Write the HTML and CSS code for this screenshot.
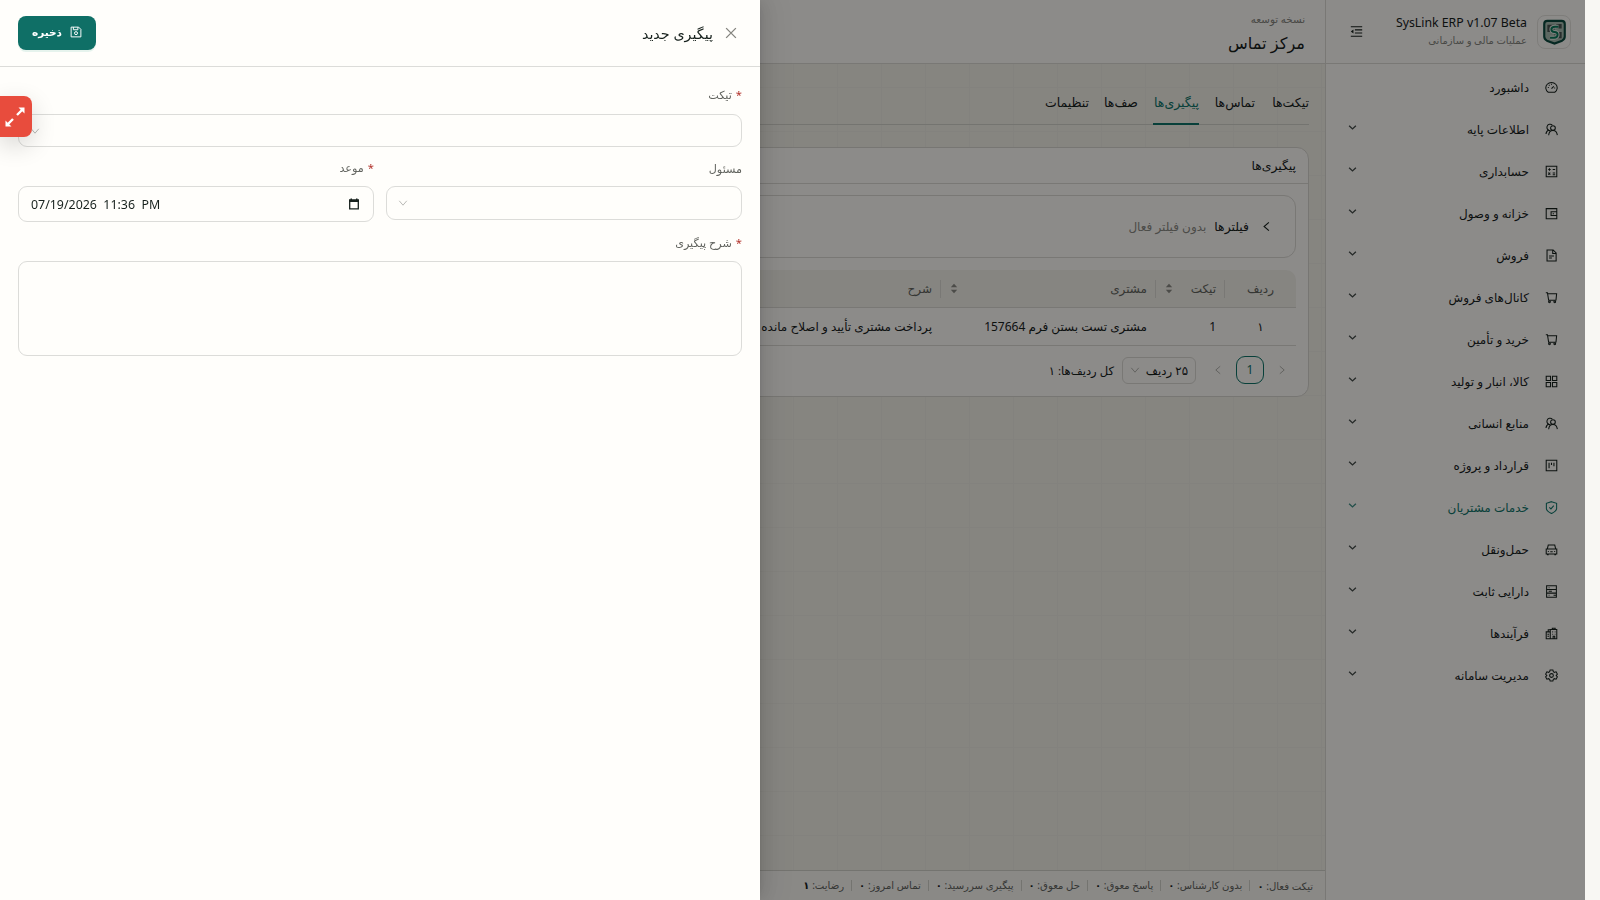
FILE: index.html
```html
<!DOCTYPE html>
<html lang="fa" dir="rtl">
<head>
    <meta charset="UTF-8">
    <meta name="viewport" content="width=device-width, initial-scale=1.0">
    <title>مرکز تماس</title>
    <link rel="stylesheet" href="styles.css">
</head>
<body>
    <svg class="sprite">
        <symbol id="i-dash" viewBox="0 0 16 16"><path d="M4 13.800a7 6.600 0 1 1 8 0zM8 9.500l2.800-3M8 3.500v1.200M3.500 8h1.200M11.300 8.500h1.200M4.800 4.800l.8.8"/></symbol>
        <symbol id="i-team" viewBox="0 0 16 16"><circle cx="9.800" cy="6.200" r="2.900"/><path d="M4.500 15c.3-3.500 2-5.800 5.300-5.800s5 2.500 5.400 5.800M6.500 9.500a4 4 0 1 1 2.500-7M5 8.200C2.800 9 1.500 10.800 1.200 13.500"/></symbol>
        <symbol id="i-calc" viewBox="0 0 16 16"><path d="M1.500 1.500h13v13h-13zM4 5.500h3M5.500 4v3M9.500 5.500h3M4 9.500l2.500 2.500M6.500 9.500L4 12M9.500 9.800h3M9.500 12h3"/></symbol>
        <symbol id="i-wallet" viewBox="0 0 16 16"><path d="M1.500 2h13v12.500h-13zM14.500 5.800H7.500v4.700h7M9.500 8.200h1.500"/></symbol>
        <symbol id="i-file" viewBox="0 0 16 16"><path d="M2.500 1.200h7.500l3.700 3.700v9.900H2.500zM9.500 1.500v4h4M5 8.500h6M5 11h3.500"/></symbol>
        <symbol id="i-cart" viewBox="0 0 16 16"><path d="M1 2.200h2l1.500 9.300h9.200M3.300 3.500h11l-.8 8"/><circle cx="5.500" cy="13.300" r="1.100"/><circle cx="12" cy="13.300" r="1.100"/></symbol>
        <symbol id="i-grid" viewBox="0 0 16 16"><path d="M1.500 1.500h5.300v5.300H1.500zM9.200 1.500h5.300v5.300H9.200zM1.500 9.200h5.300v5.300H1.500zM9.200 9.200h5.300v5.300H9.200z"/></symbol>
        <symbol id="i-project" viewBox="0 0 16 16"><path d="M1.500 1.500h13v13h-13zM5 4.500v7M8 4.500v3M11 4.500v4.500"/></symbol>
        <symbol id="i-shield" viewBox="0 0 16 16"><path d="M8 .8l6.300 2v6.500c0 3-3.300 4.700-6.300 6.200-3-1.500-6.300-3.200-6.300-6.200V2.800zM5.300 7.800l2 2 3.500-4"/></symbol>
        <symbol id="i-car" viewBox="0 0 16 16"><path d="M1.500 7.500h13v6h-13zM2.800 7.500L4 2.500h8l1.200 5M3.500 10.500h1.200M11.300 10.500h1.200M6.500 10.800h3M2.500 14.500h2M11.500 14.500h2"/></symbol>
        <symbol id="i-asset" viewBox="0 0 16 16"><path d="M2 1h12v14H2zM2 5.500h12M2 10h12M4.500 3.300h1M4.500 7.800h4M4.500 12.500h1M10.500 12.500h3"/></symbol>
        <symbol id="i-process" viewBox="0 0 16 16"><path d="M6.500 3h8v11.500h-8zM1.500 6h5v8.500h-5zM4 6V3.500h2.500M9 3V1.500h3.500V3M9 6h1M12 6h.8M9 9h1M12 9h.8M10 14v-2.500h2V14M3 9h2M3 11.500h2"/></symbol>
        <symbol id="i-gear" viewBox="0 0 16 16"><path d="M6.300 1.300h3.400l.6 2 1.300.8 2.100-.6 1.600 2.900-1.500 1.600 1.500 1.600-1.600 2.900-2.100-.6-1.300.8-.6 2H6.300l-.6-2-1.300-.8-2.100.6L.7 9.600 2.200 8 .7 6.400l1.600-2.900 2.100.6 1.300-.8z"/><circle cx="8" cy="8" r="2.300"/></symbol>
        <symbol id="i-down" viewBox="0 0 16 16"><path d="M2 4.500l6 7 6-7"/></symbol>
        <symbol id="i-menu-down" viewBox="0 0 16 16"><path d="M2 5l6 5.500L14 5"/></symbol>
        <symbol id="i-left" viewBox="0 0 16 16"><path d="M11.500 2l-7 6 7 6"/></symbol>
        <symbol id="i-right" viewBox="0 0 16 16"><path d="M4.500 2l7 6-7 6"/></symbol>
        <symbol id="i-close" viewBox="0 0 16 16"><path d="M1.500 1.500l13 13M14.500 1.500l-13 13"/></symbol>
        <symbol id="i-save" viewBox="0 0 16 16"><path d="M1.500 1.500h10l3 3v10h-13zM4.500 1.500v3.500h6V1.500"/><circle cx="8" cy="9.500" r="2"/></symbol>
        <symbol id="i-fold" viewBox="0 0 16 16"><path d="M1 2.200h14M6 6h9M6 9.900h9M1 13.800h14"/><path class="solid" d="M4.200 5.500v5L1 8z"/></symbol>
        <symbol id="i-sort" viewBox="0 0 10 14"><path class="solid" d="M5 1l4 4.500H1zM5 13l4-4.500H1z"/></symbol>
    </svg>

    <div class="app">
        <aside class="sidebar">
            <div class="brand">
                <div class="logo">
                    <svg viewBox="0 0 28 30">
                        <path class="logo-shield" d="M6 2.500h16q3.500 0 3.500 3.500v14q0 3-3 4.700L14 28l-8.500-3.300q-3-1.700-3-4.700V6Q2.500 2.500 6 2.500z"/>
                        <path class="logo-block" d="M6 7h8v8H6zM14 15h8v7h-8zM16 6h6v5h-6z"/>
                        <path class="logo-line" d="M18.500 9h-4q-4 0-4 3t3.500 3 3.500 3-4 3.500H9"/>
                        <path class="logo-curve" d="M18.500 9h-4q-4 0-4 3t3.500 3 3.500 3-4 3.500H9"/>
                    </svg>
                </div>
                <div class="brand-text">
                    <div class="brand-name" dir="ltr">SysLink ERP v1.07 Beta</div>
                    <div class="brand-sub">عملیات مالی و سازمانی</div>
                </div>
                <svg class="icon fold"><use href="#i-fold"/></svg>
            </div>
            <nav class="menu">
                <a class="item"><svg class="icon"><use href="#i-dash"/></svg><span>داشبورد</span></a>
                <a class="item"><svg class="icon"><use href="#i-team"/></svg><span>اطلاعات پایه</span><svg class="arrow"><use href="#i-menu-down"/></svg></a>
                <a class="item"><svg class="icon"><use href="#i-calc"/></svg><span>حسابداری</span><svg class="arrow"><use href="#i-menu-down"/></svg></a>
                <a class="item"><svg class="icon"><use href="#i-wallet"/></svg><span>خزانه و وصول</span><svg class="arrow"><use href="#i-menu-down"/></svg></a>
                <a class="item"><svg class="icon"><use href="#i-file"/></svg><span>فروش</span><svg class="arrow"><use href="#i-menu-down"/></svg></a>
                <a class="item"><svg class="icon"><use href="#i-cart"/></svg><span>کانال‌های فروش</span><svg class="arrow"><use href="#i-menu-down"/></svg></a>
                <a class="item"><svg class="icon"><use href="#i-cart"/></svg><span>خرید و تأمین</span><svg class="arrow"><use href="#i-menu-down"/></svg></a>
                <a class="item"><svg class="icon"><use href="#i-grid"/></svg><span>کالا، انبار و تولید</span><svg class="arrow"><use href="#i-menu-down"/></svg></a>
                <a class="item"><svg class="icon"><use href="#i-team"/></svg><span>منابع انسانی</span><svg class="arrow"><use href="#i-menu-down"/></svg></a>
                <a class="item"><svg class="icon"><use href="#i-project"/></svg><span>قرارداد و پروژه</span><svg class="arrow"><use href="#i-menu-down"/></svg></a>
                <a class="item active"><svg class="icon"><use href="#i-shield"/></svg><span>خدمات مشتریان</span><svg class="arrow"><use href="#i-menu-down"/></svg></a>
                <a class="item"><svg class="icon"><use href="#i-car"/></svg><span>حمل‌ونقل</span><svg class="arrow"><use href="#i-menu-down"/></svg></a>
                <a class="item"><svg class="icon"><use href="#i-asset"/></svg><span>دارایی ثابت</span><svg class="arrow"><use href="#i-menu-down"/></svg></a>
                <a class="item"><svg class="icon"><use href="#i-process"/></svg><span>فرآیندها</span><svg class="arrow"><use href="#i-menu-down"/></svg></a>
                <a class="item"><svg class="icon"><use href="#i-gear"/></svg><span>مدیریت سامانه</span><svg class="arrow"><use href="#i-menu-down"/></svg></a>
            </nav>
        </aside>

        <div class="main">
            <header class="topbar">
                <div class="env">نسخه توسعه</div>
                <h1>مرکز تماس</h1>
            </header>
            <div class="content">
                <div class="tabs">
                    <a class="tab">تیکت‌ها</a>
                    <a class="tab">تماس‌ها</a>
                    <a class="tab current">پیگیری‌ها</a>
                    <a class="tab">صف‌ها</a>
                    <a class="tab">تنظیمات</a>
                </div>
                <section class="card">
                    <h2>پیگیری‌ها</h2>
                    <div class="card-body">
                        <div class="filters">
                            <svg class="icon"><use href="#i-left"/></svg>
                            <b>فیلترها</b>
                            <span>بدون فیلتر فعال</span>
                        </div>
                        <div class="row head">
                            <div class="cell c1">ردیف</div>
                            <div class="cell c2">تیکت<svg class="sort"><use href="#i-sort"/></svg></div>
                            <div class="cell c3">مشتری<svg class="sort"><use href="#i-sort"/></svg></div>
                            <div class="cell c4">شرح</div>
                        </div>
                        <div class="row">
                            <div class="cell c1">۱</div>
                            <div class="cell c2">1</div>
                            <div class="cell c3">مشتری تست بستن فرم 157664</div>
                            <div class="cell c4">پرداخت مشتری تأیید و اصلاح مانده حساب</div>
                        </div>
                        <div class="pager">
                            <svg class="icon"><use href="#i-right"/></svg>
                            <span class="page">1</span>
                            <svg class="icon"><use href="#i-left"/></svg>
                            <span class="size">۲۵ ردیف<svg class="icon"><use href="#i-down"/></svg></span>
                            <span class="total">کل ردیف‌ها: ۱</span>
                        </div>
                    </div>
                </section>
            </div>
            <footer class="status">
                <span>تیکت فعال: <b>۰</b></span>
                <span>بدون کارشناس: <b>۰</b></span>
                <span>پاسخ معوق: <b>۰</b></span>
                <span>حل معوق: <b>۰</b></span>
                <span>پیگیری سررسید: <b>۰</b></span>
                <span>تماس امروز: <b>۰</b></span>
                <span>رضایت: <b>۱</b></span>
            </footer>
        </div>
    </div>

    <div class="mask"></div>

    <div class="drawer">
        <div class="drawer-head">
            <svg class="icon close"><use href="#i-close"/></svg>
            <h3>پیگیری جدید</h3>
            <button class="save"><svg class="icon"><use href="#i-save"/></svg>ذخیره</button>
        </div>
        <form class="form">
            <div class="field wide">
                <label class="required">تیکت</label>
                <div class="control select"><svg class="icon"><use href="#i-down"/></svg></div>
            </div>
            <div class="field">
                <label>مسئول</label>
                <div class="control select owner"><svg class="icon"><use href="#i-down"/></svg></div>
            </div>
            <div class="field">
                <label class="required due">موعد</label>
                <div class="control date" dir="ltr">
                    <span>07/19/2026&nbsp; 11:36&nbsp; PM</span>
                    <svg class="calendar" viewBox="0 0 12 12"><path d="M1.700 2.200h8.600v8.600H1.700z"/><path class="solid" d="M1 1.500h10v2.500H1zM2.500.5h1.500v2H2.500zM8 .5h1.500v2H8z"/></svg>
                </div>
            </div>
            <div class="field wide">
                <label class="required">شرح پیگیری</label>
                <div class="control area"></div>
            </div>
        </form>
    </div>

    <div class="expand">
        <svg viewBox="0 0 20 20"><path d="M12 8l5-5M8 12l-5 5"/><path class="solid" d="M13.500.5h6v6zM.5 13.500v6h6z"/></svg>
    </div>
</body>
</html>
```

FILE: styles.css
```css
* {
    box-sizing: border-box;
}
body {
    margin: 0;
    padding-right: 15px;
    height: 900px;
    overflow: hidden;
    background: #f8f7f3;
    color: #17211d;
    font-family: "Noto Sans", "DejaVu Sans", sans-serif;
    font-size: 12px;
    white-space: nowrap;
}
h1, h2, h3 {
    margin: 0;
    font-weight: normal;
}
.sprite {
    position: absolute;
    width: 0;
    height: 0;
}
svg {
    flex: none;
    fill: none;
    stroke: currentColor;
    stroke-width: 1.3;
}
.solid {
    fill: currentColor;
    stroke: none;
}
.icon {
    width: 12px;
    height: 12px;
}
.app {
    display: flex;
    height: 900px;
}

/* sidebar */
.sidebar {
    width: 260px;
    background: #fffdfa;
    border-left: 1px solid #dcdad5;
}
.brand {
    display: flex;
    align-items: center;
    height: 64px;
    padding: 0 14px 0 24px;
    border-bottom: 1px solid #dcdad5;
}
.logo {
    display: flex;
    align-items: center;
    justify-content: center;
    width: 34px;
    height: 34px;
    border: 1px solid #e6e4df;
    border-radius: 8px;
}
.logo svg {
    width: 25px;
    height: 28px;
}
.logo-shield {
    fill: #a9bdb2;
    stroke: #0c4a3f;
    stroke-width: 2.4;
}
.logo-block {
    fill: #4a5553;
    stroke: none;
}
.logo-line {
    stroke: #e8efe9;
    stroke-width: 4.4;
}
.logo-curve {
    stroke: #0c7a5c;
    stroke-width: 2.2;
}
.brand-text {
    flex: 1;
    margin-right: 10px;
}
.brand-name {
    font-size: 12.3px;
    line-height: 17px;
    text-align: right;
}
.brand-sub {
    font-size: 10px;
    line-height: 18px;
    color: #85857f;
}
.fold {
    width: 13px;
    height: 13px;
}
.menu {
    padding-top: 2px;
}
.item {
    display: flex;
    align-items: center;
    height: 42px;
    padding: 0 27px 0 22px;
}
.item .icon {
    width: 13px;
    height: 13px;
}
.item span {
    flex: 1;
    margin-right: 16px;
}
.arrow {
    width: 9px;
    height: 9px;
    margin-bottom: 3px;
    stroke-width: 2.4;
    opacity: 0.8;
}
.active {
    color: #0f766a;
}

/* main area */
.main {
    display: flex;
    flex-direction: column;
    flex: 1;
    min-width: 0;
}
.topbar {
    height: 64px;
    padding: 10px 20px 0;
    background: #fffdfa;
    border-bottom: 1px solid #dcdad5;
}
.env {
    font-size: 10.3px;
    line-height: 18px;
    color: #85857f;
}
.topbar h1 {
    font-size: 16.2px;
    line-height: 30px;
}
.content {
    flex: 1;
    padding: 19px 16px 0;
    background-color: #f4f2ea;
    background-image: linear-gradient(90deg, #efede5 1px, transparent 1px), linear-gradient(#efede5 1px, transparent 1px);
    background-size: 44px 44px;
    background-position: 1px 23px;
}
.tabs {
    display: flex;
    gap: 15px;
    height: 42px;
    border-bottom: 1px solid #d4d3cc;
}
.tab {
    min-width: 39px;
    height: 42px;
    font-size: 12.5px;
    line-height: 39px;
}
.tab:nth-child(2) {
    width: 41px;
}
.tab:nth-child(4) {
    min-width: 34px;
}
.current {
    width: 46px;
    color: #0f766a;
    border-bottom: 2px solid #0f766a;
}
.card {
    height: 250px;
    margin-top: 22px;
    background: #fffdfa;
    border: 1px solid #d9d7d1;
    border-radius: 12px;
}
.card h2 {
    height: 36px;
    padding-right: 12px;
    font-size: 12.4px;
    line-height: 36px;
    border-bottom: 1px solid #dcdad5;
}
.card-body {
    padding: 11px 12px;
}
.filters {
    display: flex;
    align-items: center;
    height: 63px;
    padding-right: 23px;
    border: 1px solid #dcdad5;
    border-radius: 12px;
}
.filters .icon {
    width: 11px;
    height: 11px;
    stroke-width: 1.6;
}
.filters b {
    margin: 0 12px 0 8px;
    font-size: 12.4px;
    font-weight: normal;
}
.filters span {
    color: #8b8b85;
}
.row {
    display: flex;
    height: 38px;
    border-bottom: 1px solid #dcdad5;
}
.head {
    margin-top: 12px;
    background: #f4f2eb;
    border-radius: 0 10px 0 0;
    color: #63655f;
}
.cell {
    position: relative;
    display: flex;
    align-items: center;
    padding: 0 9px;
}
.head .cell + .cell::before {
    content: "";
    position: absolute;
    right: 0;
    top: 10px;
    width: 1px;
    height: 18px;
    background: #dcdad5;
}
.c1 {
    justify-content: center;
    width: 71px;
}
.c2 {
    justify-content: space-between;
    width: 69px;
}
.c3 {
    justify-content: space-between;
    width: 215px;
}
.c4 {
    flex: 1;
}
.sort {
    width: 8px;
    height: 13px;
    color: #8b8b85;
}
.pager {
    display: flex;
    align-items: center;
    padding: 10px 9px 0;
}
.pager .icon {
    width: 10px;
    height: 10px;
    color: #a3a29c;
}
.page {
    width: 28px;
    height: 28px;
    margin: 0 13px;
    line-height: 26px;
    text-align: center;
    color: #0f766a;
    border: 1px solid #0f766a;
    border-radius: 9px;
}
.size {
    display: flex;
    align-items: center;
    justify-content: space-between;
    width: 74px;
    height: 27px;
    margin: 0 17px 0 8px;
    padding: 0 7px;
    font-size: 11.8px;
    border: 1px solid #dcdad5;
    border-radius: 6px;
}
.total {
    font-size: 11.6px;
}
.status {
    display: flex;
    align-items: center;
    height: 30px;
    padding: 0 12px;
    font-size: 10.1px;
    color: #62645f;
    background: #fbf9f5;
    border-top: 1px solid #d4d3cc;
}
.status span + span {
    margin-right: 7px;
    padding-right: 7px;
    border-right: 1px solid #d4d3cc;
    line-height: 11px;
}
.status b {
    color: #17211d;
}

/* overlay and drawer */
.mask {
    position: fixed;
    top: 0;
    left: 0;
    width: 1585px;
    height: 900px;
    background: rgba(0, 0, 0, 0.45);
}
.drawer {
    position: fixed;
    top: 0;
    left: 0;
    width: 760px;
    height: 900px;
    background: #fffefb;
    box-shadow: 6px 0 16px rgba(0, 0, 0, 0.08), 3px 0 6px -4px rgba(0, 0, 0, 0.12), 9px 0 28px 8px rgba(0, 0, 0, 0.05);
}
.drawer-head {
    display: flex;
    align-items: center;
    height: 67px;
    padding: 0 23px 0 18px;
    border-bottom: 1px solid #dcdcd9;
}
.close {
    color: #85857f;
    stroke-width: 1.8;
}
.drawer h3 {
    flex: 1;
    margin-right: 12px;
    font-size: 14.3px;
}
.save {
    display: flex;
    align-items: center;
    justify-content: center;
    gap: 8px;
    width: 78px;
    height: 34px;
    padding: 0 0 2px;
    font: bold 10.5px "Noto Sans", "DejaVu Sans", sans-serif;
    color: #fff;
    background: #0f6f66;
    border: none;
    border-radius: 8px;
    box-shadow: 0 2px 0 rgba(5, 145, 120, 0.1);
}
.form {
    display: grid;
    grid-template-columns: 356px 356px;
    gap: 0 12px;
    padding: 18px 18px 0;
}
.wide {
    grid-column: span 2;
}
.field {
    height: 74px;
}
.field label {
    display: block;
    height: 27px;
    line-height: 20px;
    font-size: 11.2px;
    color: #62645f;
}
.wide label {
    height: 28px;
}
.wide:first-child label {
    height: 29px;
}
.field .due {
    line-height: 18px;
}
.required::before {
    content: "*";
    margin-left: 4px;
    color: #b3352e;
}
.control {
    display: flex;
    align-items: center;
    height: 33px;
    padding: 0 12px;
    border: 1px solid #dcdcd9;
    border-radius: 9px;
}
.select .icon {
    width: 10px;
    height: 10px;
    margin-right: auto;
    margin-left: -1px;
    color: #a9a9a5;
}
.owner {
    height: 34px;
}
.date {
    justify-content: space-between;
    height: 36px;
    font-size: 12.4px;
}
.date .calendar {
    width: 12px;
    height: 12px;
    margin-right: 1px;
}
.area {
    height: 95px;
}
.expand {
    position: fixed;
    top: 96px;
    left: 0;
    display: flex;
    align-items: center;
    justify-content: center;
    width: 32px;
    height: 41px;
    color: #fff;
    background: #e84c3d;
    border-radius: 0 8px 8px 0;
    box-shadow: 0 8px 24px rgba(0, 0, 0, 0.16);
}
.expand svg {
    width: 20px;
    height: 20px;
    margin-right: 2px;
    stroke-width: 2.4;
}
```
